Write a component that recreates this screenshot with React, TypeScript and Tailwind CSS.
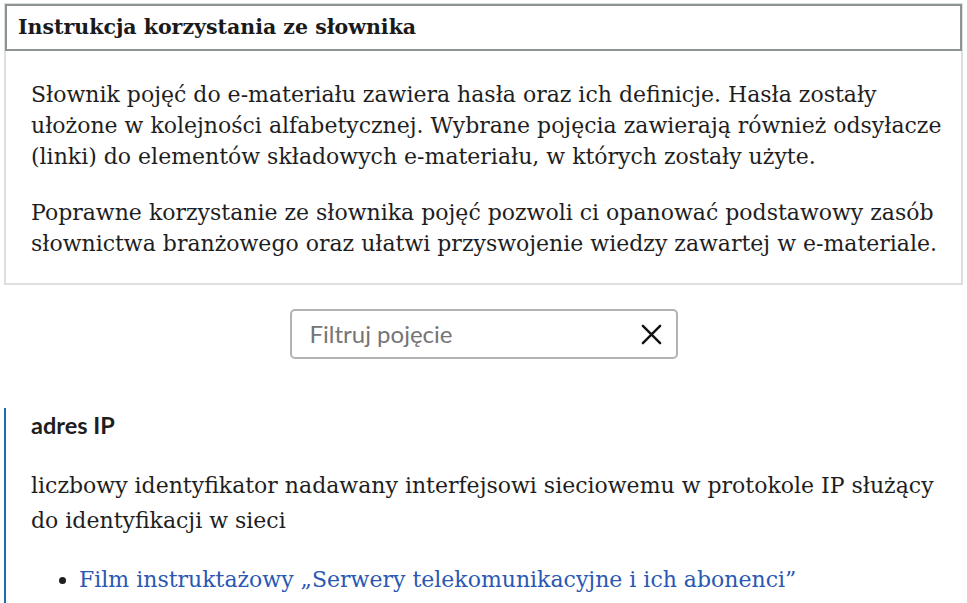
import React from "react";

const serif = { fontFamily: '"DejaVu Serif", "Liberation Serif", serif' };

export default function App() {
  return (
    <div className="w-[967px] h-[603px] overflow-hidden bg-white text-[#1e1e1e]">
      <div className="pt-[3px] px-[4px]">
        <div className="border-2 border-[#dcdfe0]">
          <div className="border-2 border-[#8d9293] -mt-[1px] -mx-[1px] h-[47px] flex items-center pl-[11px]">
            <h2 className="text-[20.5px] font-bold text-[#1a1a1a]" style={serif}>
              Instrukcja korzystania ze słownika
            </h2>
          </div>
          <div className="pl-[25px] pr-[8px] pt-[28px] pb-[24px] text-[22px] leading-[31px]" style={serif}>
            <p>
              Słownik pojęć do e-materiału zawiera hasła oraz ich definicje. Hasła zostały ułożone w kolejności alfabetycznej. Wybrane pojęcia zawierają również odsyłacze (linki) do elementów składowych e-materiału, w których zostały użyte.
            </p>
            <p className="mt-[25px]">
              Poprawne korzystanie ze słownika pojęć pozwoli ci opanować podstawowy zasób słownictwa branżowego oraz ułatwi przyswojenie wiedzy zawartej w e-materiale.
            </p>
          </div>
        </div>
      </div>

      <div className="flex justify-center mt-[24px]">
        <div className="w-[388px] h-[50px] border-2 border-[#b3b3b3] rounded-[5px] flex items-center pl-[18px] pr-[13px]">
          <span className="flex-1 text-[24px] text-[#757575]" style={{ fontFamily: 'Lato, sans-serif' }}>
            Filtruj pojęcie
          </span>
          <svg width="23" height="23" viewBox="0 0 24 24" fill="none" stroke="#111" strokeWidth="2.5" strokeLinecap="round">
            <path d="M3 3 L21 21 M21 3 L3 21" />
          </svg>
        </div>
      </div>

      <div className="mt-[49px] ml-[4px] border-l-2 border-[#1c6db4] pl-[25px] pt-[2px]">
        <h3 className="text-[23.5px] font-bold leading-[30px] text-[#1e1e1e]" style={{ fontFamily: 'Lato, sans-serif' }}>
          adres IP
        </h3>
        <p className="mt-[28px] text-[22px] leading-[35px] pr-[20px]" style={serif}>
          liczbowy identyfikator nadawany interfejsowi sieciowemu w protokole IP służący do identyfikacji w sieci
        </p>
        <ul className="mt-[24px] list-disc pl-[48px] text-[22px] leading-[35px] pb-[20px]" style={serif}>
          <li className="text-[#1e1e1e]">
            <a className="text-[#2a58b2]">Film instruktażowy „Serwery telekomunikacyjne i ich abonenci”</a>
          </li>
        </ul>
      </div>
    </div>
  );
}
